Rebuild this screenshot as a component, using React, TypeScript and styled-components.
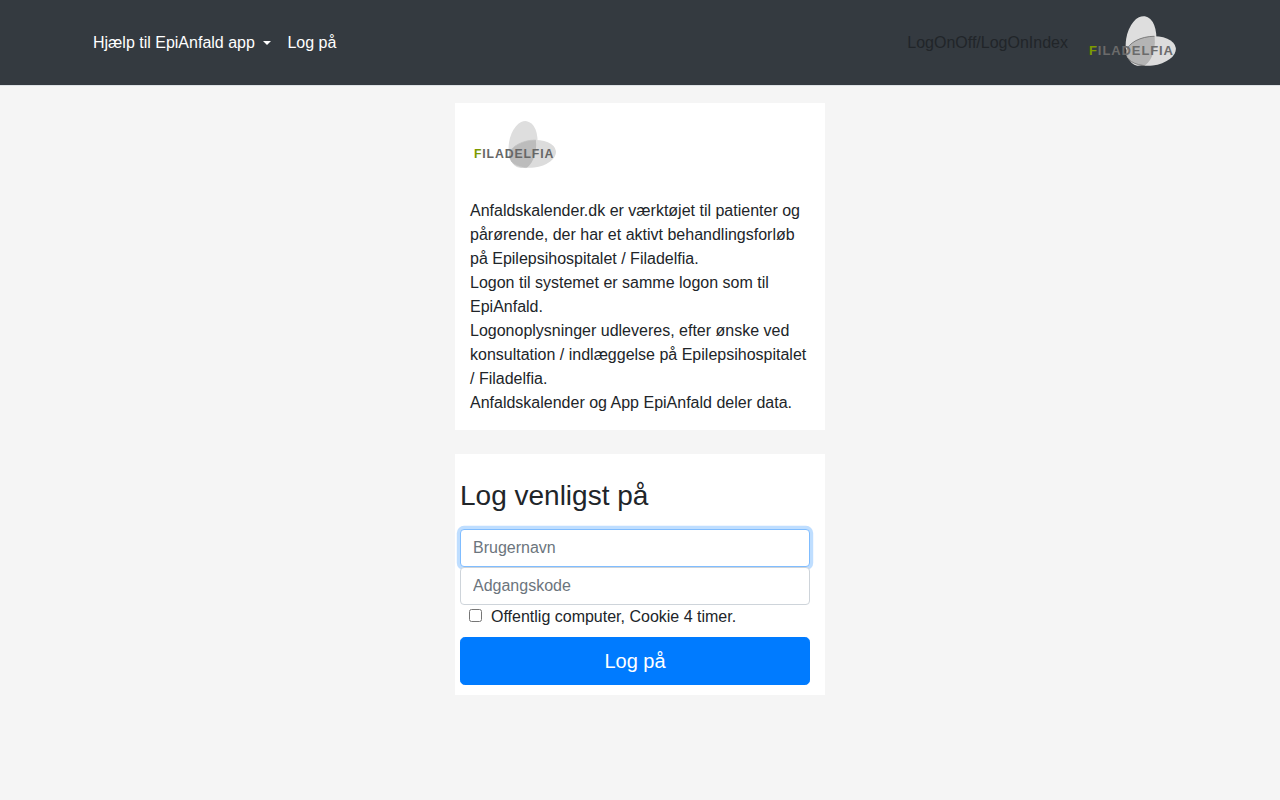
import React from "react";
import styled, { createGlobalStyle } from "styled-components";

const Global = createGlobalStyle`
  html, body { margin: 0; padding: 0; }
  body {
    background: #f5f5f5;
    color: #212529;
    font-family: "Liberation Sans", Arial, sans-serif;
    font-size: 16px;
    line-height: 1.5;
    text-rendering: optimizeLegibility;
  }
  * { box-sizing: border-box; }
`;

const Navbar = styled.nav`
  height: 86px;
  background: #343a40;
  border-bottom: 1px solid #dee2e6;
  display: flex;
  justify-content: center;
`;
const NavInner = styled.div`
  width: 1110px;
  display: flex;
  align-items: center;
  justify-content: space-between;
`;
const NavGroup = styled.div`
  display: flex;
  align-items: center;
`;
const NavLink = styled.a<{ $dark?: boolean }>`
  padding: 8px;
  color: ${(p) => (p.$dark ? "#212529" : "#fff")};
  white-space: nowrap;
`;
const Caret = styled.span`
  display: inline-block;
  margin-left: 8.53px;
  vertical-align: 3px;
  border-top: 4.8px solid #fff;
  border-left: 4.8px solid transparent;
  border-right: 4.8px solid transparent;
`;
const NavLogo = styled.div`
  width: 90px;
  height: 54px;
  margin: 0 17px 3px 12px;
`;
const Main = styled.main`
  width: 370px;
  margin: 17px auto 0;
  display: flex;
  flex-direction: column;
  gap: 24px;
`;
const InfoCard = styled.section`
  background: #fff;
  padding: 15px;
`;
const LogoRow = styled.div`
  height: 81px;
  padding: 1px 0 0 3px;
`;
const CardLogo = styled.div`
  width: 85px;
  height: 51px;
`;
const LoginCard = styled.form`
  background: #fff;
  padding: 25px 15px 10px 5px;
`;
const Heading = styled.h2`
  margin: 0 0 16px;
  font-size: 28px;
  font-weight: 500;
  line-height: 1.2;
`;
const Field = styled.input`
  display: block;
  position: relative;
  width: 100%;
  height: 38px;
  padding: 6px 12px;
  font: inherit;
  color: #495057;
  background: #fff;
  border: 1px solid #ced4da;
  border-radius: 4px;
  outline: 0;
  &::placeholder { color: #6c757d; opacity: 1; }
  &:focus {
    border-color: #80bdff;
    box-shadow: 0 0 0 3.2px rgba(0, 123, 255, 0.25);
  }
`;
const CheckRow = styled.label`
  display: flex;
  align-items: center;
  height: 24px;
  padding-left: 9px;
`;
const Check = styled.input`
  width: 13px;
  height: 13px;
  margin: 0 9px 2px 0;
`;
const Submit = styled.button`
  display: block;
  width: 100%;
  height: 48px;
  margin-top: 8px;
  background: #007bff;
  color: #fff;
  border: 1px solid #007bff;
  border-radius: 4.8px;
  font: inherit;
  font-size: 20px;
`;

const Logo = ({ id, text, line, overlap }: { id: string; text: string; line: string; overlap: string }) => (
  <svg viewBox="0 0 90 54" width="100%" height="100%">
    <defs>
      <clipPath id={id}>
        <ellipse cx="53" cy="27" rx="15" ry="25" transform="rotate(9 53 27)" />
      </clipPath>
    </defs>
    <ellipse cx="53" cy="27" rx="15" ry="25" transform="rotate(9 53 27)" fill="#dedede" />
    <ellipse cx="63" cy="37" rx="25" ry="14.5" transform="rotate(-7 63 37)" fill="#dcdcdc" />
    <ellipse cx="63" cy="37" rx="25" ry="14.5" transform="rotate(-7 63 37)" fill={overlap} stroke={line} strokeWidth="0.8" clipPath={`url(#${id})`} />
    <text x="1" y="41" fontFamily="Liberation Sans, Arial, sans-serif" fontSize="13" fontWeight="700" fill={text} textLength="84" lengthAdjust="spacing">
      <tspan fill="#7d9a00">F</tspan>ILADELFIA
    </text>
  </svg>
);

export default function App() {
  return (
    <>
      <Global />
      <Navbar>
        <NavInner>
          <NavGroup>
            <NavLink>Hjælp til EpiAnfald app<Caret /></NavLink>
            <NavLink>Log på</NavLink>
          </NavGroup>
          <NavGroup>
            <NavLink $dark>LogOnOff/LogOnIndex</NavLink>
            <NavLogo><Logo id="nav-logo" text="#6b6b6b" line="#6f6f6f" overlap="#b4b4b4" /></NavLogo>
          </NavGroup>
        </NavInner>
      </Navbar>
      <Main>
        <InfoCard>
          <LogoRow><CardLogo><Logo id="card-logo" text="#666" line="#c4c4c4" overlap="#bcbcbc" /></CardLogo></LogoRow>
          Anfaldskalender.dk er værktøjet til patienter og pårørende, der har et aktivt behandlingsforløb på Epilepsihospitalet / Filadelfia.<br />
          Logon til systemet er samme logon som til EpiAnfald.<br />
          Logonoplysninger udleveres, efter ønske ved konsultation / indlæggelse på Epilepsihospitalet / Filadelfia.<br />
          Anfaldskalender og App EpiAnfald deler data.
        </InfoCard>
        <LoginCard onSubmit={(e) => e.preventDefault()}>
          <Heading>Log venligst på</Heading>
          <Field placeholder="Brugernavn" autoFocus />
          <Field placeholder="Adgangskode" type="password" />
          <CheckRow><Check type="checkbox" />Offentlig computer, Cookie 4 timer.</CheckRow>
          <Submit type="submit">Log på</Submit>
        </LoginCard>
      </Main>
    </>
  );
}
